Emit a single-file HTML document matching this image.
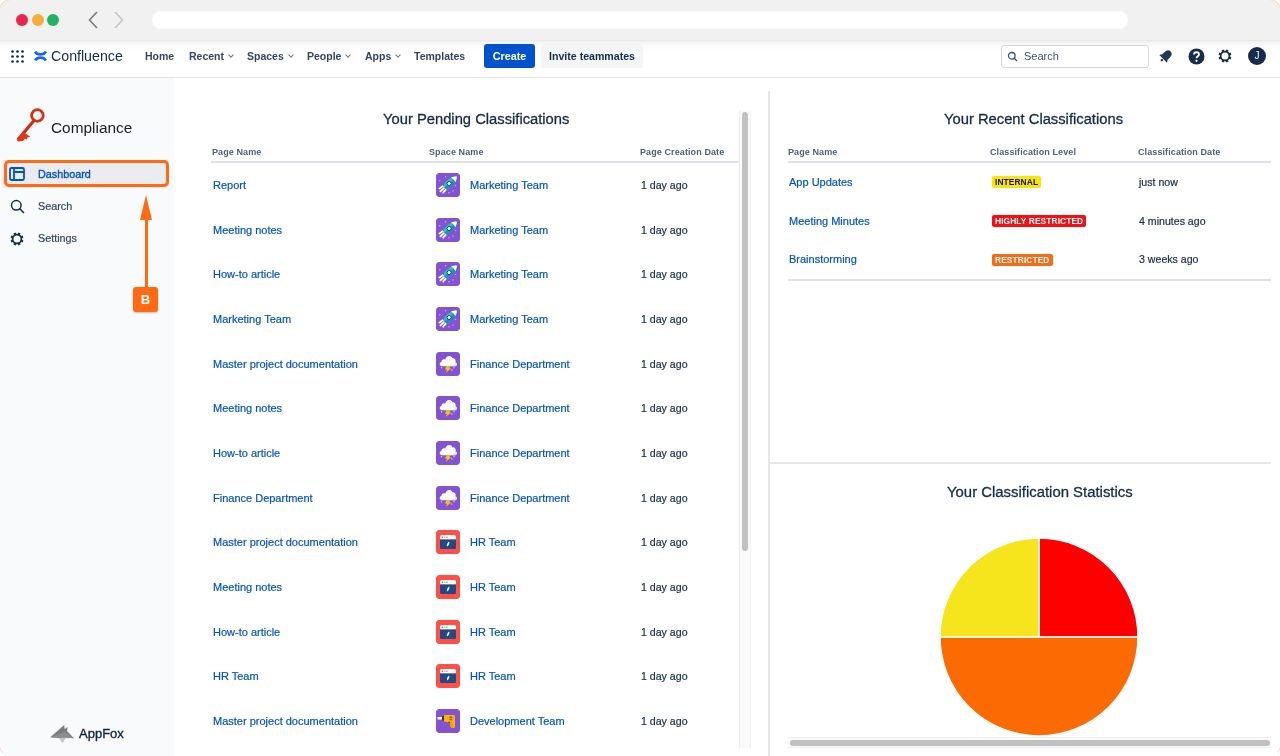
<!DOCTYPE html>
<html><head><meta charset="utf-8">
<style>
*{box-sizing:border-box;margin:0;padding:0}
html,body{width:1280px;height:756px;overflow:hidden;background:#fff;font-family:"Liberation Sans",sans-serif;}
body>*{will-change:transform}
.abs{position:absolute}
#chrome{position:absolute;left:0;top:0;width:1280px;height:40px;background:#f1f1f1}
.tl{position:absolute;top:14px;width:12px;height:12px;border-radius:50%}
#url{position:absolute;left:152px;top:11px;width:976px;height:18px;background:#fff;border-radius:9px}
#nav{position:absolute;left:0;top:40px;width:1280px;height:38px;background:linear-gradient(#e6e6e6 0,#f3f3f3 2px,#fbfbfb 6px,#fff 11px);border-bottom:1.5px solid #e2e4e8}
.ni{position:absolute;top:48.5px;font-size:10.5px;font-weight:bold;color:#344563;line-height:14px}
.chev{display:inline-block;width:4px;height:4px;border-right:1.1px solid #6b778c;border-bottom:1.1px solid #6b778c;transform:rotate(45deg);margin-left:5px;position:relative;top:-3px}
#side{position:absolute;left:0;top:78px;width:174px;height:678px;background:#f9fafc}
.sb{position:absolute;font-size:10.8px;color:#344563;-webkit-text-stroke:.2px currentColor}
.title{position:absolute;font-size:14.75px;-webkit-text-stroke:.3px currentColor;color:#172b4d;line-height:18px;white-space:nowrap}
.th{position:absolute;font-size:9px;font-weight:bold;color:#505f79;white-space:nowrap;line-height:12px;letter-spacing:.1px}
.lnk{position:absolute;font-size:11px;-webkit-text-stroke:.2px currentColor;color:#0052cc;white-space:nowrap;line-height:14px}
.txt{position:absolute;font-size:10.6px;-webkit-text-stroke:.2px currentColor;color:#172b4d;white-space:nowrap;line-height:14px}
.ic{position:absolute;width:24px;height:24px;border-radius:3px}
.badge{position:absolute;font-size:8.4px;font-weight:bold;color:#fff;line-height:12px;padding:0 3px;border-radius:2px;letter-spacing:.1px}
</style></head><body>
<svg width="0" height="0" style="position:absolute">
<defs>
<symbol id="i-rocket" viewBox="0 0 24 24">
  <rect x="0" y="0" width="24" height="24" rx="3" fill="#8453d2"/>
  <g fill="#c4b0ef"><circle cx="9.5" cy="3.8" r=".75"/><circle cx="3.8" cy="7.8" r=".75"/><circle cx="19.5" cy="12.5" r=".75"/><circle cx="17" cy="18" r=".75"/><circle cx="13" cy="19.8" r=".75"/></g>
  <g transform="rotate(-42 12 11.5)">
    <path d="M5.5 11.5 C7 7.8 14 7.5 19 8.3 C21.5 9.3 23.2 10.6 24 11.5 C23.2 12.4 21.5 13.7 19 14.7 C14 15.5 7 15.2 5.5 11.5Z" fill="#2dc1b5"/>
    <path d="M5.5 11.5 C7 15.2 14 15.5 19 14.7 C21.5 13.7 23.2 12.4 24 11.5 Z" fill="#1b8fbf"/>
    <path d="M19 8.3 C21.5 9.3 23.2 10.6 24 11.5 C23.2 12.4 21.5 13.7 19 14.7 C19.6 12.5 19.6 10.5 19 8.3Z" fill="#fff"/>
    <circle cx="13.5" cy="11.5" r="2" fill="#fff" stroke="#1c3d6e" stroke-width=".9"/>
    <path d="M2 7.8 L7.5 8.3 L7.5 10.2 L2.5 9.6Z M1 10.6 L7 10.6 L7 12.4 L1 12.4Z M2.5 13.4 L7.5 12.8 L7.5 14.7 L2 15.2Z" fill="#fff"/>
  </g>
</symbol>
<symbol id="i-cloud" viewBox="0 0 24 24">
  <rect x="0" y="0" width="24" height="24" rx="3" fill="#8453d2"/>
  <path d="M6 14.2 C3.3 14.2 3 10.3 5.5 10 C5.3 7.6 7.8 6.6 9.3 7.6 C9.8 3.6 15 2.4 16.4 6.4 C18.9 6 20.4 8.6 19.4 10.6 C21.6 11 21.4 14.2 19.2 14.2 Z" fill="#fff"/>
  <path d="M19.4 10.6 C21.6 11 21.4 14.2 19.2 14.2 L15.5 14.2 C17.5 13.8 19 12.3 19.4 10.6Z" fill="#d6f0f6"/>
  <path d="M10.5 14.2 L14.8 14.2 L13.2 16.3 L15.5 16.3 L9.5 21 L11.2 17.8 L9 17.8 Z" fill="#ffc400"/>
  <g fill="#d8c8f5"><circle cx="5.5" cy="15.8" r=".75"/><circle cx="18" cy="15.8" r=".75"/><circle cx="15.8" cy="18" r=".75"/></g>
</symbol>
<symbol id="i-hr" viewBox="0 0 24 24">
  <rect x="0" y="0" width="24" height="24" rx="3" fill="#ff4f46"/>
  <path d="M4 6.5 C4 5.5 4.8 5 5.8 5 L18.2 5 C19.2 5 20 5.5 20 6.5 L20 9.5 L4 9.5Z" fill="#fff"/>
  <path d="M4 9.5 L20 9.5 L20 17.5 C20 18.5 19.2 19 18.2 19 L5.8 19 C4.8 19 4 18.5 4 17.5Z" fill="#1f4a86"/>
  <circle cx="6.5" cy="7.3" r=".8" fill="#ff3b3b"/><circle cx="8.8" cy="7.3" r=".8" fill="#ffb400"/><circle cx="11" cy="7.3" r=".8" fill="#2ec4c4"/>
  <path d="M13 11.5 C14 12.5 13 15.5 11 16.5 C10.5 15 11.5 12.5 13 11.5Z" fill="#fff"/>
</symbol>
<symbol id="i-drill" viewBox="0 0 24 24">
  <rect x="0" y="0" width="24" height="24" rx="3" fill="#8453d2"/>
  <path d="M1.5 8 L6 8 L6 10.5 L1.5 10.5Z" fill="#fff"/>
  <path d="M6 7 L8 7 L8 11.5 L6 11.5Z" fill="#1c3d6e"/>
  <path d="M8 6 L17.5 6 C18.5 6 19 6.5 19 7.5 L19 17.5 C19 18.5 18.2 19 17 19 L16.5 19 C15.5 19 15 18.5 14.5 17.5 L13.5 13.5 L8 12.5Z" fill="#ffb300"/>
  <path d="M13.5 13.5 L16.5 13 L17 19 C15.5 19 15 18.5 14.5 17.5Z" fill="#ff9800"/>
  <rect x="13.5" y="7.5" width="2.8" height="1.6" fill="#7a6a55"/><rect x="13.5" y="9.7" width="2.8" height="1.6" fill="#7a6a55"/>
  <path d="M12.5 12.5 L13.8 12.8 L14 14.2 L12.5 13.8Z" fill="#1c3d6e"/>
</symbol>
</defs>
</svg>
<div id="chrome">
  <div class="tl" style="left:16px;background:#e8254a"></div>
  <div class="tl" style="left:32px;background:#f8ad3a"></div>
  <div class="tl" style="left:47px;background:#22b266"></div>
  <svg class="abs" style="left:86px;top:10px" width="40" height="20"><path d="M11 2 L3.5 10 L11 18" fill="none" stroke="#7a7a7a" stroke-width="1.6"/><path d="M29 2 L36.5 10 L29 18" fill="none" stroke="#c4c4c4" stroke-width="1.6"/></svg>
  <div id="url"></div>
</div>
<div id="nav">
  <svg class="abs" style="left:10.5px;top:9.5px" width="13" height="13"><g fill="#172b4d"><circle cx="1.5" cy="1.5" r="1.35"/><circle cx="6.5" cy="1.5" r="1.35"/><circle cx="11.5" cy="1.5" r="1.35"/><circle cx="1.5" cy="6.5" r="1.35"/><circle cx="6.5" cy="6.5" r="1.35"/><circle cx="11.5" cy="6.5" r="1.35"/><circle cx="1.5" cy="11.5" r="1.35"/><circle cx="6.5" cy="11.5" r="1.35"/><circle cx="11.5" cy="11.5" r="1.35"/></g></svg>
  <svg class="abs" style="left:33px;top:9px" width="15" height="14" viewBox="0 0 15 14"><path d="M2.2 2.4 C3.8 6.4 11.2 6.4 12.8 2.4" fill="none" stroke="#1a66e6" stroke-width="2.7"/><path d="M2.2 11.6 C3.8 7.6 11.2 7.6 12.8 11.6" fill="none" stroke="#1a66e6" stroke-width="2.7"/></svg>
  <div class="abs" style="left:51px;top:7px;font-size:14.2px;color:#172b4d;line-height:18px">Confluence</div>
</div>
<div class="ni" style="left:144.5px">Home</div>
<div class="ni" style="left:188.5px">Recent<span class="chev"></span></div>
<div class="ni" style="left:246.5px">Spaces<span class="chev"></span></div>
<div class="ni" style="left:307px">People<span class="chev"></span></div>
<div class="ni" style="left:365px">Apps<span class="chev"></span></div>
<div class="ni" style="left:414px">Templates</div>
<div class="abs" style="left:484px;top:44px;width:51px;height:24px;background:#0052cc;border-radius:3px;color:#fff;font-size:10.8px;font-weight:bold;text-align:center;line-height:25px">Create</div>
<div class="abs" style="left:541px;top:44px;width:102px;height:24px;background:#f4f5f7;border-radius:3px;color:#172b4d;font-size:10.6px;font-weight:bold;text-align:center;line-height:25px">Invite teammates</div>
<div class="abs" style="left:1001px;top:44.5px;width:148px;height:23px;border:1.5px solid #d3d7de;border-radius:3px;background:#fff"></div>
<svg class="abs" style="left:1007px;top:51px" width="12" height="12"><circle cx="4.8" cy="4.8" r="3.3" fill="none" stroke="#42526e" stroke-width="1.3"/><path d="M7.2 7.2 L9.5 9.5" stroke="#42526e" stroke-width="1.4" stroke-linecap="round"/></svg>
<div class="abs" style="left:1024px;top:49px;font-size:11px;color:#42526e;line-height:14px">Search</div>
<svg class="abs" style="left:1158px;top:48px" width="16" height="16" viewBox="0 0 16 16"><g transform="rotate(45 8 8)"><path d="M8 1.5 C5.2 1.5 4.2 4 4.2 6.5 L4.2 9.5 L2.5 12 L13.5 12 L11.8 9.5 L11.8 6.5 C11.8 4 10.8 1.5 8 1.5Z" fill="#253858"/><circle cx="8" cy="13.8" r="1.3" fill="#253858"/></g></svg>
<svg class="abs" style="left:1187.5px;top:47.5px" width="17" height="17"><circle cx="8.5" cy="8.5" r="8" fill="#172b4d"/><path d="M6 6.5 C6 3.5 11 3.5 11 6.5 C11 8.3 8.5 8.3 8.5 10.3" fill="none" stroke="#fff" stroke-width="1.8"/><circle cx="8.5" cy="12.8" r="1.1" fill="#fff"/></svg>
<svg class="abs" style="left:1218px;top:48.5px" width="14" height="14" viewBox="0 0 14 14"><path fill="#172b4d" fill-rule="evenodd" d="M12.20 7.00 L12.14 7.80 L13.44 8.44 L12.57 10.54 L11.20 10.06 L10.68 10.68 L10.06 11.20 L10.54 12.57 L8.44 13.44 L7.80 12.14 L7.00 12.20 L6.20 12.14 L5.56 13.44 L3.46 12.57 L3.94 11.20 L3.32 10.68 L2.80 10.06 L1.43 10.54 L0.56 8.44 L1.86 7.80 L1.80 7.00 L1.86 6.20 L0.56 5.56 L1.43 3.46 L2.80 3.94 L3.32 3.32 L3.94 2.80 L3.46 1.43 L5.56 0.56 L6.20 1.86 L7.00 1.80 L7.80 1.86 L8.44 0.56 L10.54 1.43 L10.06 2.80 L10.68 3.32 L11.20 3.94 L12.57 3.46 L13.44 5.56 L12.14 6.20Z M10.50 7 A3.5 3.5 0 1 0 3.50 7 A3.5 3.5 0 1 0 10.50 7Z"/></svg>
<div class="abs" style="left:1248px;top:47px;width:18px;height:18px;border-radius:50%;background:#172b4d;color:#fff;font-size:10px;text-align:center;line-height:18px">J</div>

<div id="side"></div>
<!-- key logo -->
<svg class="abs" style="left:14px;top:106px" width="34" height="38" viewBox="0 0 34 38">
  <circle cx="23.4" cy="9.5" r="5.8" fill="none" stroke="#d9300f" stroke-width="2.8"/>
  <path d="M20.5 14 L4 33.5" stroke="#d22a12" stroke-width="3.2"/>
  <path d="M9.5 26 L16.3 30.8 L13.5 31.6 L12.5 33.5 L11 32.8 L9 35 L4.5 35.5 L2.5 34 Z" fill="#dc3a18"/>
</svg>
<div class="abs" style="left:51px;top:119px;font-size:15.4px;color:#1d1d1d;line-height:18px">Compliance</div>
<div class="abs" style="left:2px;top:160px;width:167px;height:28px;background:#ebecf0;border-radius:3px"></div>
<div class="abs" style="left:4px;top:160px;width:165px;height:27px;border:3px solid #ff6a13;border-radius:5px"></div>
<svg class="abs" style="left:9px;top:167px" width="16" height="14" viewBox="0 0 16 14"><rect x="1" y="1" width="14" height="12" rx="1.5" fill="none" stroke="#0052cc" stroke-width="1.8"/><path d="M5 1 V13 M5 5 H15" stroke="#0052cc" stroke-width="1.8"/></svg>
<div class="sb" style="left:38px;top:167px;color:#0052cc;line-height:14px;-webkit-text-stroke:.35px #0052cc">Dashboard</div>
<svg class="abs" style="left:10px;top:199px" width="16" height="16"><circle cx="6.3" cy="6.3" r="4.8" fill="none" stroke="#172b4d" stroke-width="1.5"/><path d="M9.8 9.8 L13.5 13.5" stroke="#172b4d" stroke-width="1.6" stroke-linecap="round"/></svg>
<div class="sb" style="left:38px;top:199px;line-height:14px">Search</div>
<svg class="abs" style="left:10px;top:232px" width="14" height="14" viewBox="0 0 14 14"><path fill="#172b4d" fill-rule="evenodd" d="M12.20 7.00 L12.14 7.80 L13.44 8.44 L12.57 10.54 L11.20 10.06 L10.68 10.68 L10.06 11.20 L10.54 12.57 L8.44 13.44 L7.80 12.14 L7.00 12.20 L6.20 12.14 L5.56 13.44 L3.46 12.57 L3.94 11.20 L3.32 10.68 L2.80 10.06 L1.43 10.54 L0.56 8.44 L1.86 7.80 L1.80 7.00 L1.86 6.20 L0.56 5.56 L1.43 3.46 L2.80 3.94 L3.32 3.32 L3.94 2.80 L3.46 1.43 L5.56 0.56 L6.20 1.86 L7.00 1.80 L7.80 1.86 L8.44 0.56 L10.54 1.43 L10.06 2.80 L10.68 3.32 L11.20 3.94 L12.57 3.46 L13.44 5.56 L12.14 6.20Z M10.50 7 A3.5 3.5 0 1 0 3.50 7 A3.5 3.5 0 1 0 10.50 7Z"/></svg>
<div class="sb" style="left:38px;top:231px;line-height:14px">Settings</div>
<!-- arrow -->
<div class="abs" style="left:145px;top:218px;width:3px;height:72px;background:#ff6a13"></div>
<svg class="abs" style="left:139px;top:195px" width="14" height="25"><path d="M7 0 L13 25 L1 25 Z" fill="#ff6a13"/></svg>
<div class="abs" style="left:133px;top:287px;width:25px;height:25px;background:#ff6a13;border-radius:3px;color:#fff;font-size:13px;font-weight:bold;text-align:center;line-height:25px;box-shadow:0 1px 2px rgba(0,0,0,.25)">B</div>
<!-- appfox -->
<svg class="abs" style="left:49px;top:724px" width="26" height="20" viewBox="0 0 26 20">
<path d="M1.3 13.3 L15.2 1 L15.6 5 L18.8 3 L18 7 L25 14.3 L16.5 13.8 L13.5 18.8 L10.5 14.2 Z" fill="#7d7d7d"/>
<path d="M10 14 L16.5 13.6 L21 14 L16 14.5 L13.5 18.8 Z" fill="#c9c9c9"/>
<path d="M1.3 13.3 L10 10.5 L15.5 8 L25 14.3 L16 13.6 L10 14 Z" fill="#8f8f8f"/>
</svg>
<div class="abs" style="left:79px;top:726px;font-size:13px;color:#10224a;line-height:16px;-webkit-text-stroke:.35px #10224a">AppFox</div>

<!-- pending panel -->
<div class="title" style="left:383px;top:110px">Your Pending Classifications</div>
<div class="th" style="left:212px;top:146px">Page Name</div>
<div class="th" style="left:429px;top:146px">Space Name</div>
<div class="th" style="left:640px;top:146px">Page Creation Date</div>
<div class="abs" style="left:211px;top:161px;width:529px;height:2px;background:#dfe1e6"></div>
<div id="rows"><div class="lnk" style="left:213px;top:178px">Report</div>
<svg class="ic" style="left:436px;top:173px" width="24" height="24"><use href="#i-rocket"/></svg>
<div class="lnk" style="left:470px;top:178px">Marketing Team</div>
<div class="txt" style="left:641px;top:178px">1 day ago</div>
<div class="lnk" style="left:213px;top:223px">Meeting notes</div>
<svg class="ic" style="left:436px;top:218px" width="24" height="24"><use href="#i-rocket"/></svg>
<div class="lnk" style="left:470px;top:223px">Marketing Team</div>
<div class="txt" style="left:641px;top:223px">1 day ago</div>
<div class="lnk" style="left:213px;top:267px">How-to article</div>
<svg class="ic" style="left:436px;top:262px" width="24" height="24"><use href="#i-rocket"/></svg>
<div class="lnk" style="left:470px;top:267px">Marketing Team</div>
<div class="txt" style="left:641px;top:267px">1 day ago</div>
<div class="lnk" style="left:213px;top:312px">Marketing Team</div>
<svg class="ic" style="left:436px;top:307px" width="24" height="24"><use href="#i-rocket"/></svg>
<div class="lnk" style="left:470px;top:312px">Marketing Team</div>
<div class="txt" style="left:641px;top:312px">1 day ago</div>
<div class="lnk" style="left:213px;top:357px">Master project documentation</div>
<svg class="ic" style="left:436px;top:352px" width="24" height="24"><use href="#i-cloud"/></svg>
<div class="lnk" style="left:470px;top:357px">Finance Department</div>
<div class="txt" style="left:641px;top:357px">1 day ago</div>
<div class="lnk" style="left:213px;top:401px">Meeting notes</div>
<svg class="ic" style="left:436px;top:396px" width="24" height="24"><use href="#i-cloud"/></svg>
<div class="lnk" style="left:470px;top:401px">Finance Department</div>
<div class="txt" style="left:641px;top:401px">1 day ago</div>
<div class="lnk" style="left:213px;top:446px">How-to article</div>
<svg class="ic" style="left:436px;top:441px" width="24" height="24"><use href="#i-cloud"/></svg>
<div class="lnk" style="left:470px;top:446px">Finance Department</div>
<div class="txt" style="left:641px;top:446px">1 day ago</div>
<div class="lnk" style="left:213px;top:491px">Finance Department</div>
<svg class="ic" style="left:436px;top:486px" width="24" height="24"><use href="#i-cloud"/></svg>
<div class="lnk" style="left:470px;top:491px">Finance Department</div>
<div class="txt" style="left:641px;top:491px">1 day ago</div>
<div class="lnk" style="left:213px;top:535px">Master project documentation</div>
<svg class="ic" style="left:436px;top:530px" width="24" height="24"><use href="#i-hr"/></svg>
<div class="lnk" style="left:470px;top:535px">HR Team</div>
<div class="txt" style="left:641px;top:535px">1 day ago</div>
<div class="lnk" style="left:213px;top:580px">Meeting notes</div>
<svg class="ic" style="left:436px;top:575px" width="24" height="24"><use href="#i-hr"/></svg>
<div class="lnk" style="left:470px;top:580px">HR Team</div>
<div class="txt" style="left:641px;top:580px">1 day ago</div>
<div class="lnk" style="left:213px;top:625px">How-to article</div>
<svg class="ic" style="left:436px;top:620px" width="24" height="24"><use href="#i-hr"/></svg>
<div class="lnk" style="left:470px;top:625px">HR Team</div>
<div class="txt" style="left:641px;top:625px">1 day ago</div>
<div class="lnk" style="left:213px;top:669px">HR Team</div>
<svg class="ic" style="left:436px;top:664px" width="24" height="24"><use href="#i-hr"/></svg>
<div class="lnk" style="left:470px;top:669px">HR Team</div>
<div class="txt" style="left:641px;top:669px">1 day ago</div>
<div class="lnk" style="left:213px;top:714px">Master project documentation</div>
<svg class="ic" style="left:436px;top:709px" width="24" height="24"><use href="#i-drill"/></svg>
<div class="lnk" style="left:470px;top:714px">Development Team</div>
<div class="txt" style="left:641px;top:714px">1 day ago</div></div><!--/rows-->
<!-- scrollbar -->
<div class="abs" style="left:739px;top:110px;width:12px;height:638px;background:#fafafa;border-left:1px solid #ececec;border-right:1px solid #f0f0f0"></div>
<div class="abs" style="left:742px;top:112px;width:6px;height:439px;background:#c1c1c1;border-radius:3px"></div>
<div class="abs" style="left:768px;top:91px;width:2px;height:665px;background:#e4e6ea"></div>

<!-- recent panel -->
<div class="title" style="left:944px;top:110px">Your Recent Classifications</div>
<div class="th" style="left:788px;top:146px">Page Name</div>
<div class="th" style="left:990px;top:146px">Classification Level</div>
<div class="th" style="left:1138px;top:146px">Classification Date</div>
<div class="abs" style="left:788px;top:161px;width:483px;height:2px;background:#dfe1e6"></div>
<div class="lnk" style="left:789px;top:175px">App Updates</div>
<div class="lnk" style="left:789px;top:214px">Meeting Minutes</div>
<div class="lnk" style="left:789px;top:252px">Brainstorming</div>
<div class="badge" style="left:992px;top:176px;background:#f6e40c;color:#111">INTERNAL</div>
<div class="badge" style="left:992px;top:215px;background:#f70d12">HIGHLY RESTRICTED</div>
<div class="badge" style="left:992px;top:253.5px;background:#fa6a12">RESTRICTED</div>
<div class="txt" style="left:1139px;top:175px">just now</div>
<div class="txt" style="left:1139px;top:214px">4 minutes ago</div>
<div class="txt" style="left:1139px;top:252px">3 weeks ago</div>
<div class="abs" style="left:788px;top:279px;width:483px;height:2px;background:#dfe1e6"></div>
<div class="abs" style="left:770px;top:462px;width:501px;height:2px;background:#e4e6ea"></div>


<div class="title" style="left:947px;top:483px;font-size:14.9px">Your Classification Statistics</div>
<svg class="abs" style="left:939px;top:537px" width="200" height="200" viewBox="0 0 200 200">
  <path d="M100 100 L100 1 A99 99 0 0 1 199 100 Z" fill="#ff0000" stroke="#fff" stroke-width="1.5"/>
  <path d="M100 100 L199 100 A99 99 0 0 1 1 100 Z" fill="#fc6b03" stroke="#fff" stroke-width="1.5"/>
  <path d="M100 100 L1 100 A99 99 0 0 1 100 1 Z" fill="#f6e51c" stroke="#fff" stroke-width="1.5"/>
</svg>
<div class="abs" style="left:788px;top:737px;width:483px;height:11px;background:#fafafa;border-top:1px solid #eee;border-bottom:1px solid #f2f2f2"></div>
<div class="abs" style="left:790px;top:740px;width:480px;height:6px;background:#c1c1c1;border-radius:3px"></div>
<div class="abs" style="left:-1px;top:-1px;width:1282px;height:758px;border-radius:12px;border:1.5px solid rgba(255,150,90,.3);border-bottom-color:transparent;box-shadow:0 0 0 30px #fff;pointer-events:none"></div>
</body></html>
